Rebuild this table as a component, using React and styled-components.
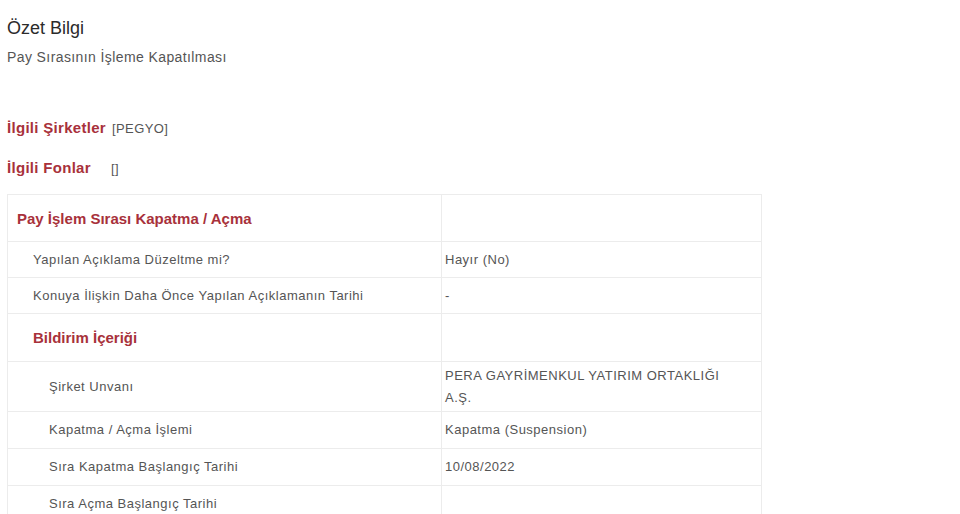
import React from "react";
import styled, { createGlobalStyle } from "styled-components";

const rows = [
  { type: "head", level: 0, label: "Pay İşlem Sırası Kapatma / Açma" },
  { level: 1, label: "Yapılan Açıklama Düzeltme mi?", value: "Hayır (No)" },
  { level: 1, label: "Konuya İlişkin Daha Önce Yapılan Açıklamanın Tarihi", value: "-" },
  { type: "head", level: 1, label: "Bildirim İçeriği" },
  { level: 2, label: "Şirket Unvanı", value: ["PERA GAYRİMENKUL YATIRIM ORTAKLIĞI", "A.Ş."] },
  { level: 2, label: "Kapatma / Açma İşlemi", value: "Kapatma (Suspension)" },
  { level: 2, label: "Sıra Kapatma Başlangıç Tarihi", value: "10/08/2022" },
  { level: 2, label: "Sıra Açma Başlangıç Tarihi", value: "" },
];

// row content height depends on nesting level
const rowHeight = (row) => {
  if (row.type === "head") return row.level === 0 ? 40 : 41;
  return row.level === 2 ? 30 : 29;
};

const App = () => {
  return (
    <Page>
      <GlobalStyle />
      <Title>Özet Bilgi</Title>
      <Subtitle>Pay Sırasının İşleme Kapatılması</Subtitle>

      <Related>
        <RelatedLine>
          <RelatedLabel>İlgili Şirketler</RelatedLabel>
          <RelatedValue>[PEGYO]</RelatedValue>
        </RelatedLine>
        <RelatedLine>
          <RelatedLabel>İlgili Fonlar</RelatedLabel>
          <RelatedValue $gap={20}>[]</RelatedValue>
        </RelatedLine>
      </Related>

      <Table>
        <colgroup>
          <col style={{ width: 434 }} />
          <col style={{ width: 320 }} />
        </colgroup>
        <tbody>
          {rows.map((row, i) =>
            row.type === "head" ? (
              <tr key={i}>
                <HeadCell $level={row.level} $h={rowHeight(row)}>
                  {row.label}
                </HeadCell>
                <ValueCell $h={rowHeight(row)} />
              </tr>
            ) : (
              <tr key={i}>
                <LabelCell $level={row.level} $h={rowHeight(row)}>
                  {row.label}
                </LabelCell>
                <ValueCell $h={rowHeight(row)}>
                  {Array.isArray(row.value)
                    ? row.value.map((v, j) => <Line key={j}>{v}</Line>)
                    : row.value}
                </ValueCell>
              </tr>
            )
          )}
        </tbody>
      </Table>
    </Page>
  );
};

export default App;

const GlobalStyle = createGlobalStyle`
  body {
    margin: 0;
    background: #fff;
    font-family: "Liberation Sans", Arial, sans-serif;
  }
`;

const Page = styled.div`
  padding: 17px 7px 0;
  width: 960px;
  height: 514px;
  box-sizing: border-box;
  overflow: hidden;
`;

const Title = styled.h2`
  margin: 0;
  font-size: 18px;
  font-weight: normal;
  line-height: 22px;
  color: #2b2b2b;
`;

const Subtitle = styled.div`
  margin-top: 9px;
  font-size: 14px;
  line-height: 18px;
  color: #555;
  letter-spacing: 0.4px;
`;

const Related = styled.div`
  margin-top: 53px;
  display: flex;
  flex-direction: column;
  gap: 21px;
`;

const RelatedLine = styled.div`
  display: flex;
  align-items: baseline;
  line-height: 18px;
`;

const RelatedLabel = styled.span`
  font-size: 15px;
  font-weight: bold;
  color: #a8313b;
  letter-spacing: 0.3px;
`;

const RelatedValue = styled.span`
  margin-left: ${(p) => p.$gap || 6}px;
  font-size: 13px;
  color: #555;
  letter-spacing: 0.4px;
`;

const Table = styled.table`
  margin-top: 16px;
  border-collapse: collapse;
  table-layout: fixed;
  width: 754px;
  border: 1px solid #ececec;

  td {
    border: 1px solid #ececec;
    vertical-align: middle;
  }
`;

const HeadCell = styled.td`
  height: ${(p) => p.$h}px;
  padding: 3px 0 3px ${(p) => 9 + p.$level * 16}px;
  font-size: 15px;
  font-weight: bold;
  color: #a8313b;
`;

const LabelCell = styled.td`
  height: ${(p) => p.$h}px;
  padding: 3px 0 3px ${(p) => 9 + p.$level * 16}px;
  font-size: 13px;
  line-height: 21.5px;
  color: #555;
  letter-spacing: 0.5px;
`;

const ValueCell = styled.td`
  height: ${(p) => p.$h}px;
  padding: 3px 3px;
  font-size: 13px;
  line-height: 21.5px;
  color: #555;
  letter-spacing: 0.5px;
`;

const Line = styled.div``;
